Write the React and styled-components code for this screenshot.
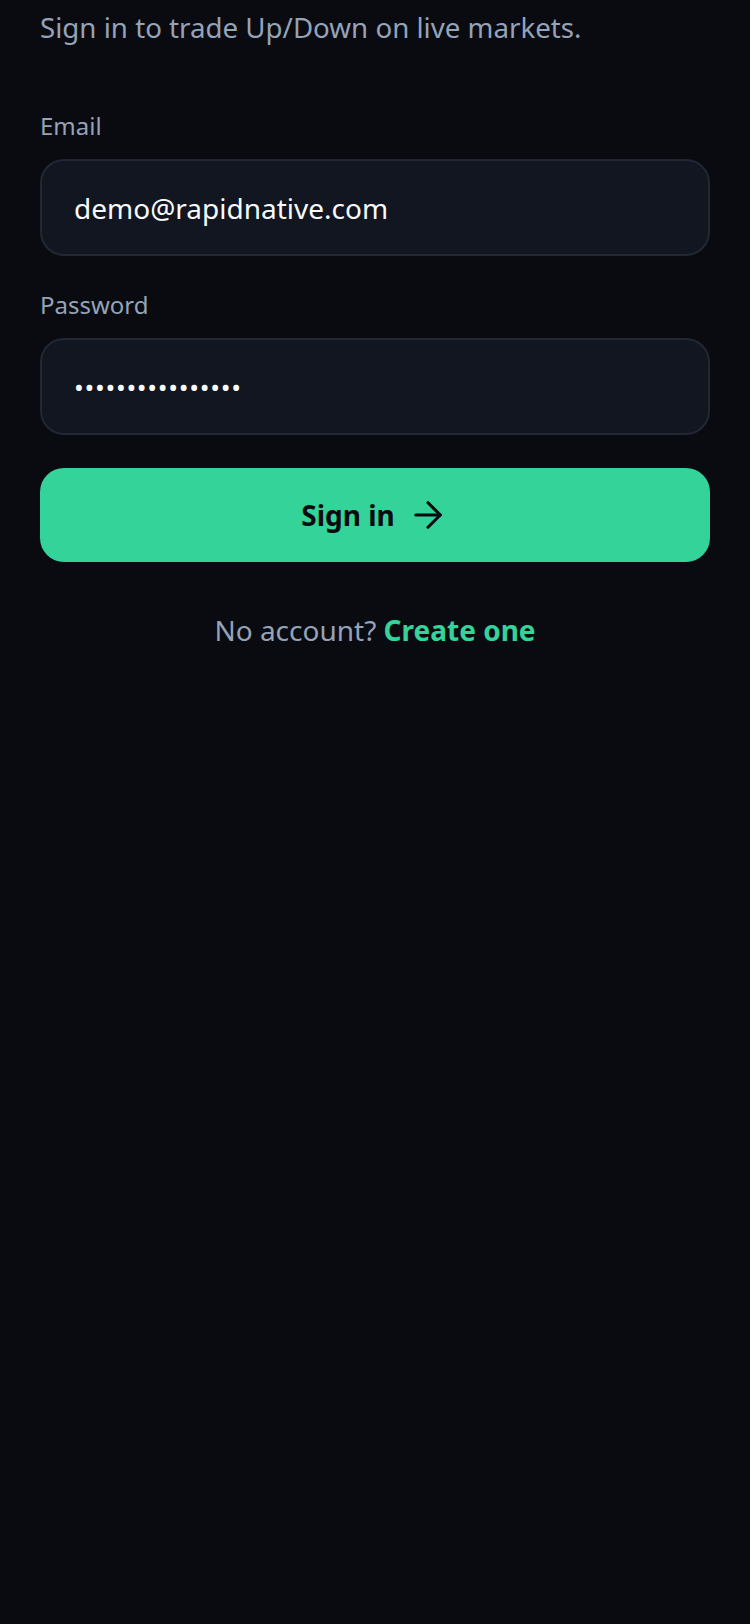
import React from 'react';
import styled, { createGlobalStyle } from 'styled-components';
import { ArrowRight } from 'lucide-react';

const GlobalStyle = createGlobalStyle`
  html, body {
    margin: 0;
    padding: 0;
    background: #0a0b10;
  }

  body {
    font-family: 'Noto Sans', 'Open Sans', sans-serif;
    -webkit-font-smoothing: antialiased;
  }
`;

const Screen = styled.main`
  min-height: 1624px;
  box-sizing: border-box;
  padding: 7px 40px 0;
  background: #0a0b10;
  display: flex;
  flex-direction: column;
`;

const Subtitle = styled.p`
  margin: 0;
  font-size: 27.7px;
  line-height: 40px;
  color: #94a3b8;
`;

const Form = styled.form`
  margin-top: 63px;
  display: flex;
  flex-direction: column;
`;

const Field = styled.div`
  display: flex;
  flex-direction: column;
  gap: 17px;
  margin-bottom: ${(p) => p.$spacing || 0}px;
`;

const Label = styled.label`
  font-size: 24px;
  line-height: 32px;
  color: #94a3b8;
`;

const Input = styled.input`
  box-sizing: border-box;
  height: 97px;
  width: 100%;
  padding: 0 32px;
  border: 2px solid #222833;
  border-radius: 24px;
  background: #111620;
  color: #f8fafc;
  font-family: inherit;
  font-size: ${(p) => (p.type === 'password' ? '26px' : '28px')};
  letter-spacing: ${(p) => (p.type === 'password' ? '0.7px' : '0')};
  outline: none;
`;

const SubmitButton = styled.button`
  margin-top: 33px;
  height: 94px;
  border: none;
  border-radius: 24px;
  background: #34d399;
  color: #0a0b10;
  font-family: inherit;
  font-size: 28px;
  font-weight: 700;
  display: flex;
  align-items: center;
  justify-content: center;
  gap: 12px;
  cursor: pointer;
`;

const Footer = styled.p`
  margin: 49px 0 0;
  text-align: center;
  font-size: 28px;
  line-height: 38px;
  color: #94a3b8;
`;

const FooterLink = styled.a`
  color: #34d399;
  font-weight: 700;
  text-decoration: none;
`;

export default function App() {
  return (
    <>
      <GlobalStyle />
      <Screen>
        <Subtitle>Sign in to trade Up/Down on live markets.</Subtitle>
        <Form onSubmit={(e) => e.preventDefault()}>
          <Field $spacing={33}>
            <Label htmlFor="email">Email</Label>
            <Input id="email" type="email" defaultValue="demo@rapidnative.com" />
          </Field>
          <Field>
            <Label htmlFor="password">Password</Label>
            <Input id="password" type="password" defaultValue="demopassword1234" />
          </Field>
          <SubmitButton type="submit">
            Sign in
            <ArrowRight size={42} strokeWidth={1.8} />
          </SubmitButton>
        </Form>
        <Footer>
          No account? <FooterLink href="#">Create one</FooterLink>
        </Footer>
      </Screen>
    </>
  );
}
